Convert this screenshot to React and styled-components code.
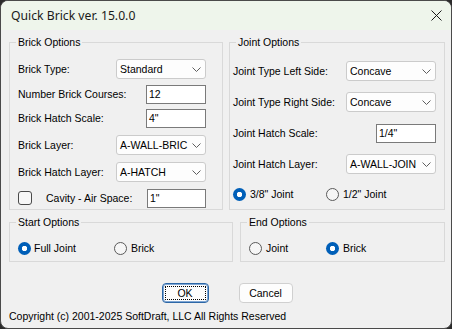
import React from 'react';
import styled, { createGlobalStyle } from 'styled-components';

const GlobalStyle = createGlobalStyle`
  html, body { margin: 0; padding: 0; background: #2b2b2b; }
  body { width: 452px; height: 329px; overflow: hidden; }
  *, *::before, *::after { box-sizing: border-box; }
`;

const Window = styled.div`
  width: 452px;
  height: 329px;
  border: 1px solid #4a4a4a;
  border-radius: 8px;
  overflow: hidden;
  background: #f0f0f0;
  display: flex;
  flex-direction: column;
  font-family: "Liberation Sans", Arial, sans-serif;
  font-size: 10.5px;
  color: #000;
`;

const TitleBar = styled.div`
  height: 29px;
  flex: none;
  background: #eef5eb;
  display: flex;
  align-items: center;
  justify-content: space-between;
  padding: 0 9px 0 10px;
  font-family: "Noto Sans", sans-serif;
  font-size: 12.2px;
  color: #1a1a1a;
`;

const CloseIcon = styled.svg`
  width: 11px;
  height: 11px;
  display: block;
`;

const Body = styled.div`
  flex: 1;
  display: flex;
  flex-direction: column;
  padding: 6px 6px 0 8px;
`;

const GroupRow = styled.div`
  display: grid;
  grid-template-columns: ${p => p.$cols};
  column-gap: ${p => p.$gap}px;
  margin-top: ${p => p.$mt || 0}px;
`;

const Group = styled.fieldset`
  margin: 0;
  padding: 0;
  min-width: 0;
  border: 1px solid #d9d9d9;
  height: ${p => p.$h}px;
`;

const Legend = styled.legend`
  padding: 0 2px;
  margin-left: 6px;
  line-height: 13px;
`;

const GroupBody = styled.div`
  display: flex;
  flex-direction: column;
  padding: ${p => p.$pad};
`;

const Row = styled.div`
  display: flex;
  align-items: center;
  justify-content: ${p => p.$justify || 'space-between'};
  height: 20px;
  margin-top: ${p => p.$mt || 0}px;
`;

const Label = styled.span`
  white-space: nowrap;
`;

const Select = styled.div`
  width: ${p => p.$w}px;
  height: 20px;
  background: #fdfdfd;
  border: 1px solid #cbcbcb;
  border-radius: 3px;
  display: flex;
  align-items: center;
  padding-left: 3px;
`;

const SelectText = styled.span`
  flex: 1;
  min-width: 0;
  white-space: nowrap;
`;

const Chevron = styled.svg`
  width: 9px;
  height: 5px;
  margin: 1px 4px 0 4px;
  flex: none;
  display: block;
`;

const TextInput = styled.div`
  width: ${p => p.$w}px;
  height: 19px;
  background: #fff;
  border: 1px solid #7a7a7a;
  padding-left: 2px;
  display: flex;
  align-items: center;
  white-space: nowrap;
`;

const CheckBox = styled.span`
  width: 14px;
  height: 14px;
  border: 1px solid #4a4a4a;
  border-radius: 3px;
  background: #f7f7f7;
  flex: none;
  margin-right: 14px;
`;

const Grow = styled.span`
  flex: 1;
`;

const RadioOption = styled.div`
  display: flex;
  align-items: center;
  gap: ${p => p.$gap}px;
  width: ${p => (p.$w ? `${p.$w}px` : 'auto')};
  white-space: nowrap;
`;

const RadioCircle = styled.span`
  width: 13px;
  height: 13px;
  border-radius: 50%;
  flex: none;
  ${p =>
    p.$checked
      ? `background: radial-gradient(circle, #ffffff 0 2.4px, #005fb8 3px);`
      : `border: 1px solid #5a5a5a; background: #f6f6f6;`}
`;

const ButtonRow = styled.div`
  display: flex;
  justify-content: center;
  gap: 30px;
  margin-top: 21px;
`;

const Button = styled.div`
  position: relative;
  width: ${p => p.$w}px;
  height: 20px;
  border-radius: 4px;
  background: #fdfdfd;
  display: flex;
  align-items: center;
  justify-content: center;
  border: 1px solid ${p => (p.$default ? '#2d67a6' : '#d0d0d0')};
  box-shadow: ${p => (p.$default ? 'inset 0 0 0 1px #7fa6d3' : 'none')};
  ${p =>
    p.$default
      ? `&::after { content: ""; position: absolute; inset: 2px; border: 1px dotted #000; border-radius: 1px; }`
      : ''}
`;

const Copyright = styled.div`
  margin-top: 7px;
  line-height: 13px;
  white-space: nowrap;
`;

const Dropdown = ({ w, children }) => (
  <Select $w={w}>
    <SelectText>{children}</SelectText>
    <Chevron viewBox="0 0 9 5">
      <polyline points="0.5,0.5 4.5,4.5 8.5,0.5" fill="none" stroke="#5f5f5f" strokeWidth="1" />
    </Chevron>
  </Select>
);

const Radio = ({ checked, w, gap = 4, children }) => (
  <RadioOption $w={w} $gap={gap}>
    <RadioCircle $checked={checked} />
    <span>{children}</span>
  </RadioOption>
);

export default function App() {
  return (
    <>
      <GlobalStyle />
      <Window>
        <TitleBar>
          <span>Quick Brick ver. 15.0.0</span>
          <CloseIcon viewBox="0 0 11 11">
            <path d="M0.5 0.5 L10.5 10.5 M10.5 0.5 L0.5 10.5" stroke="#1a1a1a" strokeWidth="1" />
          </CloseIcon>
        </TitleBar>
        <Body>
          <GroupRow $cols="214px 216px" $gap={6}>
            <Group $h={174}>
              <Legend>Brick Options</Legend>
              <GroupBody $pad="10px 16px 0 8px">
                <Row>
                  <Label>Brick Type:</Label>
                  <Dropdown w={90}>Standard</Dropdown>
                </Row>
                <Row $mt={5}>
                  <Label>Number Brick Courses:</Label>
                  <TextInput $w={60}>12</TextInput>
                </Row>
                <Row $mt={4}>
                  <Label>Brick Hatch Scale:</Label>
                  <TextInput $w={60}>4"</TextInput>
                </Row>
                <Row $mt={7}>
                  <Label>Brick Layer:</Label>
                  <Dropdown w={90}>A-WALL-BRIC</Dropdown>
                </Row>
                <Row $mt={7}>
                  <Label>Brick Hatch Layer:</Label>
                  <Dropdown w={90}>A-HATCH</Dropdown>
                </Row>
                <Row $mt={6}>
                  <CheckBox />
                  <Label>Cavity - Air Space:</Label>
                  <Grow />
                  <TextInput $w={59}>1"</TextInput>
                </Row>
              </GroupBody>
            </Group>
            <Group $h={174}>
              <Legend>Joint Options</Legend>
              <GroupBody $pad="12px 8px 0 3px">
                <Row>
                  <Label>Joint Type Left Side:</Label>
                  <Dropdown w={90}>Concave</Dropdown>
                </Row>
                <Row $mt={11}>
                  <Label>Joint Type Right Side:</Label>
                  <Dropdown w={90}>Concave</Dropdown>
                </Row>
                <Row $mt={11}>
                  <Label>Joint Hatch Scale:</Label>
                  <TextInput $w={60}>1/4"</TextInput>
                </Row>
                <Row $mt={11}>
                  <Label>Joint Hatch Layer:</Label>
                  <Dropdown w={90}>A-WALL-JOIN</Dropdown>
                </Row>
                <Row $mt={10} $justify="flex-start">
                  <Radio checked w={93}>3/8" Joint</Radio>
                  <Radio>1/2" Joint</Radio>
                </Row>
              </GroupBody>
            </Group>
          </GroupRow>
          <GroupRow $cols="224px 205px" $gap={7} $mt={6}>
            <Group $h={46}>
              <Legend>Start Options</Legend>
              <GroupBody $pad="9px 8px 0 8px">
                <Row $justify="flex-start">
                  <Radio checked w={96} gap={3}>Full Joint</Radio>
                  <Radio>Brick</Radio>
                </Row>
              </GroupBody>
            </Group>
            <Group $h={46}>
              <Legend>End Options</Legend>
              <GroupBody $pad="9px 8px 0 8px">
                <Row $justify="flex-start">
                  <Radio w={77}>Joint</Radio>
                  <Radio checked>Brick</Radio>
                </Row>
              </GroupBody>
            </Group>
          </GroupRow>
          <ButtonRow>
            <Button $w={47} $default>OK</Button>
            <Button $w={54}>Cancel</Button>
          </ButtonRow>
          <Copyright>Copyright (c) 2001-2025 SoftDraft, LLC All Rights Reserved</Copyright>
        </Body>
      </Window>
    </>
  );
}
